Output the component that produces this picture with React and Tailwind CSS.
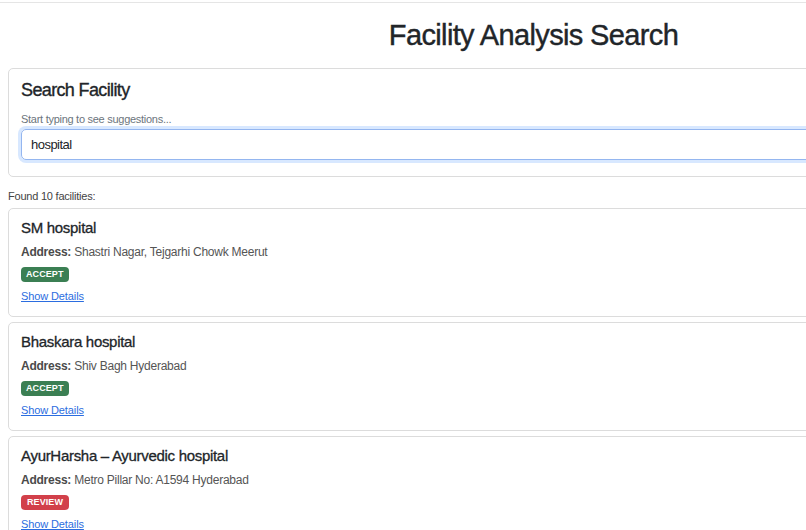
import React from 'react';

const facilities = [
  { name: 'SM hospital', address: 'Shastri Nagar, Tejgarhi Chowk Meerut', status: 'accept' },
  { name: 'Bhaskara hospital', address: 'Shiv Bagh Hyderabad', status: 'accept' },
  { name: 'AyurHarsha – Ayurvedic hospital', address: 'Metro Pillar No: A1594 Hyderabad', status: 'review' },
];

const Badge = ({ status }) => {
  if (status === 'review') {
    return (
      <span className="flex h-[15px] items-center rounded-[4px] bg-[#d2404a] px-[6px] text-[9px] font-bold uppercase leading-none tracking-[0.01em] text-white">
        Review
      </span>
    );
  }
  return (
    <span className="flex h-[15px] items-center rounded-[4px] bg-[#3b7f53] px-[5px] text-[9px] font-bold uppercase leading-none tracking-[0.01em] text-white">
      Accept
    </span>
  );
};

const FacilityCard = ({ facility }) => (
  <div className="rounded-[5px] border border-[#dcdcdc] bg-white px-3 pt-[10px] pb-[9px]">
    <h3 className="text-[15px] leading-[18px] tracking-[-0.02em] text-[#212529] [-webkit-text-stroke:0.3px_#212529]">
      {facility.name}
    </h3>
    <p className="mt-[7px] text-[12px] leading-[16px] tracking-[-0.02em] text-[#555]">
      <span className="font-bold text-[#4a4a4a]">Address:</span> {facility.address}
    </p>
    <div className="mt-[7px] flex">
      <Badge status={facility.status} />
    </div>
    <a href="#" className="mt-[7px] inline-block text-[11px] leading-[14px] tracking-[-0.01em] text-[#2b6de0] underline">
      Show Details
    </a>
  </div>
);

export default function App() {
  return (
    <div className="h-[530px] w-[806px] overflow-hidden bg-white" style={{ fontFamily: '"Liberation Sans", Arial, sans-serif' }}>
      <div className="mt-[2px] w-[1067px] border-t border-[#e5e5e5] px-2">
        <h1 className="pt-[15px] pb-[16px] text-center text-[29px] leading-[34px] tracking-[-0.022em] text-[#212529] [-webkit-text-stroke:0.4px_#212529]">
          Facility Analysis Search
        </h1>

        <div className="rounded-[5px] border border-[#dcdcdc] bg-white px-3 pt-[10px] pb-[16px]">
          <h2 className="text-[18px] leading-[22px] tracking-[-0.035em] text-[#212529] [-webkit-text-stroke:0.35px_#212529]">
            Search Facility
          </h2>
          <p className="mt-[11px] text-[11px] leading-[14px] tracking-[-0.025em] text-[#6c757d]">Start typing to see suggestions...</p>
          <input
            readOnly
            value="hospital"
            className="mt-[3px] block h-[31px] w-full rounded-[5px] border border-[#94b6f0] px-[9px] text-[13px] tracking-[-0.04em] text-[#212529] shadow-[0_0_0_3px_rgba(13,110,253,0.16)] outline-none"
          />
        </div>

        <p className="mt-[12px] mb-[5px] text-[11px] leading-[14px] tracking-[-0.02em] text-[#444]">Found 10 facilities:</p>

        <div className="flex flex-col gap-[5px]">
          {facilities.map((f) => (
            <FacilityCard key={f.name} facility={f} />
          ))}
        </div>
      </div>
    </div>
  );
}
